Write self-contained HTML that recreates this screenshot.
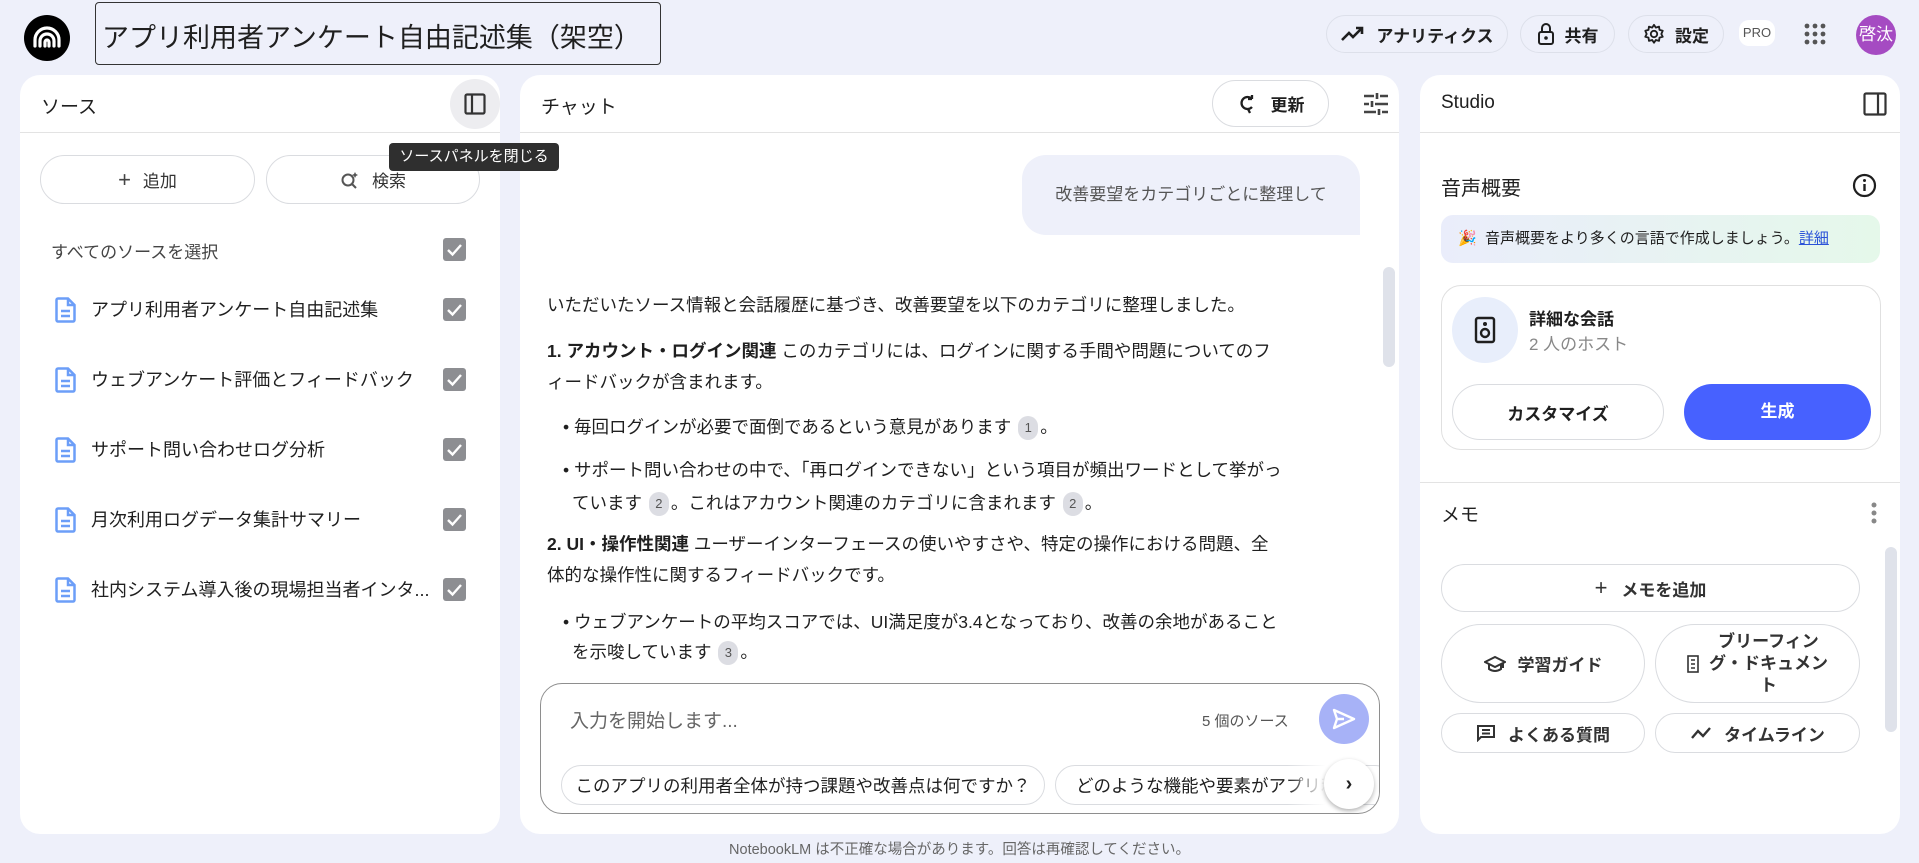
<!DOCTYPE html>
<html><head><meta charset="utf-8"><style>
*{box-sizing:border-box;margin:0;padding:0}
body{width:1919px;height:863px;overflow:hidden;background:#eef0fa;font-family:"Liberation Sans","Noto Sans CJK JP",sans-serif;color:#1f1f1f;position:relative}
.a{position:absolute}
.panel{position:absolute;background:#fff;border-radius:20px;top:75px;height:759px;overflow:hidden}
.ph{position:absolute;left:0;right:0;top:0;height:58px;border-bottom:1px solid #e3e3e3}
.pt{position:absolute;top:17px;font-size:19px;color:#1f1f1f}
.pill{position:absolute;border:1px solid #dadce0;border-radius:999px;display:flex;align-items:center;justify-content:center;font-size:17px;color:#333;background:#fff}
.hbtn{position:absolute;top:15px;height:38px;border:1px solid #dde0ea;border-radius:999px;display:flex;align-items:center;justify-content:center;gap:10px;font-size:17px;font-weight:bold;color:#1f1f1f;background:#eef0fa}
.cb{position:absolute;left:443px;width:23px;height:23px;background:#8d8e92;border-radius:3px}
.cb svg{position:absolute;left:3px;top:4px}
.src{position:absolute;left:91px;font-size:18px;color:#1f1f1f}
.doc{position:absolute;left:55px}
.t{position:absolute;left:547px;font-size:17.5px;color:#1f1f1f;white-space:nowrap}
.b{font-weight:bold}
.n{display:inline-block;width:20px;height:24px;border-radius:10px;background:#dcdde3;color:#555;font-size:13px;text-align:center;line-height:24px;vertical-align:middle;margin:0 2px}
.bl{position:absolute;left:563px;font-size:17.5px;white-space:nowrap}
</style></head><body>

<!-- header -->
<div class="a" style="left:24px;top:15px;width:46px;height:46px;border-radius:50%;background:#000">
<svg width="46" height="46" viewBox="0 0 46 46"><g fill="none" stroke="#fff" stroke-width="3.2" stroke-linecap="round"><path d="M11 31 V25 A12 12 0 0 1 35 25 V31"/><path d="M16 31 V26 A7 7 0 0 1 30 26 V31"/><path d="M21 31 V27 A2 2 0 0 1 25 27 V31"/></g></svg></div>
<div class="a" style="left:95px;top:2px;width:566px;height:63px;border:1px solid #333;border-radius:4px;font-size:27px;padding:13px 0 0 6px">アプリ利用者アンケート自由記述集（架空）</div>

<div class="hbtn" style="left:1326px;width:182px"><svg width="26" height="18" viewBox="0 0 26 18"><path d="M2 15 L9 8 L13 12 L22 3 M16 3 H22 V9" fill="none" stroke="#1f1f1f" stroke-width="2.6"/></svg>アナリティクス</div>
<div class="hbtn" style="left:1520px;width:95px"><svg width="18" height="24" viewBox="0 0 18 24"><rect x="2" y="10" width="14" height="12" rx="2" fill="none" stroke="#1f1f1f" stroke-width="2"/><path d="M5 10 V6 a4 4 0 0 1 8 0 V10" fill="none" stroke="#1f1f1f" stroke-width="2"/><circle cx="9" cy="16" r="1.8" fill="#1f1f1f"/></svg>共有</div>
<div class="hbtn" style="left:1628px;width:96px"><svg width="22" height="22" viewBox="0 0 24 24"><circle cx="12" cy="12" r="3.5" fill="none" stroke="#1f1f1f" stroke-width="2"/><path d="M12 2 l2 3 3.5-1 .5 3.5 3.5 1-1.5 3.5 1.5 3-3.5 1-.5 3.5-3.5-1-2 3-2-3-3.5 1-.5-3.5-3.5-1 1.5-3-1.5-3.5 3.5-1 .5-3.5 3.5 1z" fill="none" stroke="#1f1f1f" stroke-width="2" stroke-linejoin="round"/></svg>設定</div>
<div class="a" style="left:1739px;top:20px;width:36px;height:26px;background:#fff;border-radius:10px;font-size:13px;color:#555;text-align:center;line-height:26px">PRO</div>
<svg class="a" style="left:1804px;top:23px" width="22" height="22" viewBox="0 0 22 22" fill="#555"><circle cx="3" cy="3" r="2.4"/><circle cx="11" cy="3" r="2.4"/><circle cx="19" cy="3" r="2.4"/><circle cx="3" cy="11" r="2.4"/><circle cx="11" cy="11" r="2.4"/><circle cx="19" cy="11" r="2.4"/><circle cx="3" cy="19" r="2.4"/><circle cx="11" cy="19" r="2.4"/><circle cx="19" cy="19" r="2.4"/></svg>
<div class="a" style="left:1856px;top:15px;width:40px;height:40px;border-radius:50%;background:#a54bc2;color:#fff;font-size:17px;text-align:center;line-height:40px">啓汰</div>

<!-- left panel -->
<div class="panel" style="left:20px;width:480px">
 <div class="ph"><div class="pt" style="left:21px">ソース</div>
 <div class="a" style="left:430px;top:4px;width:50px;height:50px;border-radius:50%;background:#ededf0"><svg style="position:absolute;left:14px;top:14px" width="22" height="22" viewBox="0 0 22 22"><rect x="1.5" y="1.5" width="19" height="19" rx="1.5" fill="none" stroke="#333" stroke-width="2.2"/><path d="M8 1.5 V20.5" stroke="#333" stroke-width="2.2"/></svg></div></div>
</div>
<div class="pill" style="left:40px;top:155px;width:215px;height:49px;gap:12px"><span style="font-size:22px;color:#444">+</span>追加</div>
<div class="pill" style="left:266px;top:155px;width:214px;height:49px;gap:12px"><svg width="20" height="20" viewBox="0 0 20 20"><circle cx="8" cy="10" r="5.5" fill="none" stroke="#555" stroke-width="2"/><path d="M12 14 L16 18" stroke="#555" stroke-width="2"/><path d="M15 2 l1 2 2 1-2 1-1 2-1-2-2-1 2-1z" fill="#555"/></svg>検索</div>
<div class="a" style="left:51px;top:238px;font-size:17px;color:#444">すべてのソースを選択</div>
<div class="cb" style="top:238px"><svg width="17" height="15" viewBox="0 0 17 15"><path d="M2 8 L6.5 12.5 L15 3" fill="none" stroke="#fff" stroke-width="2.4"/></svg></div>

<svg class="doc" style="top:297px" width="21" height="26" viewBox="0 0 21 26"><path d="M3 1.5 H13 L19.5 8 V23 a1.5 1.5 0 0 1-1.5 1.5 H3 a1.5 1.5 0 0 1-1.5-1.5 V3 A1.5 1.5 0 0 1 3 1.5z M13 1.5 V8 H19.5 M6 14 H15 M6 19 H15" fill="none" stroke="#6c9ef8" stroke-width="2.5"/></svg>
<div class="src" style="top:296px">アプリ利用者アンケート自由記述集</div><div class="cb" style="top:298px"><svg width="17" height="15" viewBox="0 0 17 15"><path d="M2 8 L6.5 12.5 L15 3" fill="none" stroke="#fff" stroke-width="2.4"/></svg></div>
<svg class="doc" style="top:367px" width="21" height="26" viewBox="0 0 21 26"><path d="M3 1.5 H13 L19.5 8 V23 a1.5 1.5 0 0 1-1.5 1.5 H3 a1.5 1.5 0 0 1-1.5-1.5 V3 A1.5 1.5 0 0 1 3 1.5z M13 1.5 V8 H19.5 M6 14 H15 M6 19 H15" fill="none" stroke="#6c9ef8" stroke-width="2.5"/></svg>
<div class="src" style="top:366px">ウェブアンケート評価とフィードバック</div><div class="cb" style="top:368px"><svg width="17" height="15" viewBox="0 0 17 15"><path d="M2 8 L6.5 12.5 L15 3" fill="none" stroke="#fff" stroke-width="2.4"/></svg></div>
<svg class="doc" style="top:437px" width="21" height="26" viewBox="0 0 21 26"><path d="M3 1.5 H13 L19.5 8 V23 a1.5 1.5 0 0 1-1.5 1.5 H3 a1.5 1.5 0 0 1-1.5-1.5 V3 A1.5 1.5 0 0 1 3 1.5z M13 1.5 V8 H19.5 M6 14 H15 M6 19 H15" fill="none" stroke="#6c9ef8" stroke-width="2.5"/></svg>
<div class="src" style="top:436px">サポート問い合わせログ分析</div><div class="cb" style="top:438px"><svg width="17" height="15" viewBox="0 0 17 15"><path d="M2 8 L6.5 12.5 L15 3" fill="none" stroke="#fff" stroke-width="2.4"/></svg></div>
<svg class="doc" style="top:507px" width="21" height="26" viewBox="0 0 21 26"><path d="M3 1.5 H13 L19.5 8 V23 a1.5 1.5 0 0 1-1.5 1.5 H3 a1.5 1.5 0 0 1-1.5-1.5 V3 A1.5 1.5 0 0 1 3 1.5z M13 1.5 V8 H19.5 M6 14 H15 M6 19 H15" fill="none" stroke="#6c9ef8" stroke-width="2.5"/></svg>
<div class="src" style="top:506px">月次利用ログデータ集計サマリー</div><div class="cb" style="top:508px"><svg width="17" height="15" viewBox="0 0 17 15"><path d="M2 8 L6.5 12.5 L15 3" fill="none" stroke="#fff" stroke-width="2.4"/></svg></div>
<svg class="doc" style="top:577px" width="21" height="26" viewBox="0 0 21 26"><path d="M3 1.5 H13 L19.5 8 V23 a1.5 1.5 0 0 1-1.5 1.5 H3 a1.5 1.5 0 0 1-1.5-1.5 V3 A1.5 1.5 0 0 1 3 1.5z M13 1.5 V8 H19.5 M6 14 H15 M6 19 H15" fill="none" stroke="#6c9ef8" stroke-width="2.5"/></svg>
<div class="src" style="top:576px">社内システム導入後の現場担当者インタ...</div><div class="cb" style="top:578px"><svg width="17" height="15" viewBox="0 0 17 15"><path d="M2 8 L6.5 12.5 L15 3" fill="none" stroke="#fff" stroke-width="2.4"/></svg></div>

<!-- middle panel -->
<div class="panel" style="left:520px;width:879px">
 <div class="ph"><div class="pt" style="left:21px">チャット</div></div>
</div>
<div class="pill" style="left:1212px;top:80px;width:117px;height:47px;gap:12px;font-weight:bold;color:#1f1f1f"><svg width="22" height="20" viewBox="0 0 22 20"><path d="M15 5 A6 6 0 1 0 15 13 M15 5 V1 M15 5 H11" fill="none" stroke="#1f1f1f" stroke-width="2.3"/><path d="M11 15 L13 19" stroke="#1f1f1f" stroke-width="2.3"/></svg>更新</div>
<svg class="a" style="left:1364px;top:93px" width="24" height="22" viewBox="0 0 24 22" stroke="#444" stroke-width="2.6"><path d="M0 3 H10 M16 3 H24 M13 0 V6 M0 11 H5 M11 11 H24 M8 8 V14 M0 19 H12 M18 19 H24 M15 16 V22"/></svg>
<div class="a" style="left:1022px;top:155px;width:338px;height:80px;background:#eef0fa;border-radius:24px 24px 0 24px;font-size:17px;color:#555;text-align:center;line-height:80px">改善要望をカテゴリごとに整理して</div>
<div class="a" style="left:1383px;top:267px;width:12px;height:100px;background:#dfe2ea;border-radius:6px"></div>

<div class="t" style="top:292px">いただいたソース情報と会話履歴に基づき、改善要望を以下のカテゴリに整理しました。</div>
<div class="t" style="top:338px"><span class="b">1. アカウント・ログイン関連</span> このカテゴリには、ログインに関する手間や問題についてのフ</div>
<div class="t" style="top:369px">ィードバックが含まれます。</div>
<div class="bl" style="top:414px">• 毎回ログインが必要で面倒であるという意見があります <span class="n">1</span>。</div>
<div class="bl" style="top:457px">• サポート問い合わせの中で、「再ログインできない」という項目が頻出ワードとして挙がっ</div>
<div class="bl" style="top:490px;left:572px">ています <span class="n">2</span>。これはアカウント関連のカテゴリに含まれます <span class="n">2</span>。</div>
<div class="t" style="top:531px"><span class="b">2. UI・操作性関連</span> ユーザーインターフェースの使いやすさや、特定の操作における問題、全</div>
<div class="t" style="top:562px">体的な操作性に関するフィードバックです。</div>
<div class="bl" style="top:609px">• ウェブアンケートの平均スコアでは、UI満足度が3.4となっており、改善の余地があること</div>
<div class="bl" style="top:639px;left:572px">を示唆しています <span class="n">3</span>。</div>

<div class="a" style="left:540px;top:683px;width:840px;height:131px;border:1px solid #8e8e8e;border-radius:22px;background:#fff;overflow:hidden">
 <div class="a" style="left:29px;top:22px;font-size:19px;color:#666">入力を開始します...</div>
 <div class="a" style="left:661px;top:26px;font-size:15px;color:#555">5 個のソース</div>
 <div class="a" style="left:778px;top:10px;width:50px;height:50px;border-radius:50%;background:#a7b2f7"><svg style="position:absolute;left:13px;top:14px" width="24" height="22" viewBox="0 0 24 22"><path d="M2 2 L22 11 L2 20 L5 11z M5 11 H12" fill="none" stroke="#fff" stroke-width="2.4" stroke-linejoin="round"/></svg></div>
 <div class="pill" style="left:20px;top:81px;width:484px;height:40px;font-size:17.5px;color:#1f1f1f">このアプリの利用者全体が持つ課題や改善点は何ですか？</div>
 <div class="pill" style="left:514px;top:81px;width:340px;height:40px;font-size:17.5px;color:#1f1f1f;justify-content:flex-start;padding-left:20px;white-space:nowrap;overflow:hidden">どのような機能や要素がアプリ利用</div>
 <div class="a" style="left:746px;top:75px;width:64px;height:52px;background:linear-gradient(90deg,rgba(255,255,255,0),#fff 60%)"></div>
 <div class="a" style="left:783px;top:75px;width:50px;height:50px;border-radius:50%;background:#fff;box-shadow:0 2px 5px rgba(0,0,0,.3);text-align:center;line-height:50px;font-size:20px;font-weight:bold;color:#222">›</div>
</div>
<div class="a" style="left:0;width:1919px;top:838px;text-align:center;font-size:14.5px;color:#666">NotebookLM は不正確な場合があります。回答は再確認してください。</div>

<!-- right panel -->
<div class="panel" style="left:1420px;width:480px">
 <div class="ph"><div class="pt" style="left:21px">Studio</div>
 <svg style="position:absolute;left:443px;top:17px" width="24" height="24" viewBox="0 0 24 24"><rect x="1.5" y="1.5" width="21" height="21" rx="1.5" fill="none" stroke="#333" stroke-width="2.2"/><path d="M15 1.5 V22.5" stroke="#333" stroke-width="2.2"/></svg></div>
 <div class="a" style="left:0;right:0;top:407px;border-top:1px solid #e3e3e3"></div>
</div>
<div class="a" style="left:1441px;top:172px;font-size:20px">音声概要</div>
<svg class="a" style="left:1852px;top:173px" width="25" height="25" viewBox="0 0 25 25"><circle cx="12.5" cy="12.5" r="10.5" fill="none" stroke="#1f1f1f" stroke-width="2.2"/><path d="M12.5 11 V18" stroke="#1f1f1f" stroke-width="2.4"/><circle cx="12.5" cy="7.5" r="1.5" fill="#1f1f1f"/></svg>
<div class="a" style="left:1441px;top:215px;width:439px;height:48px;border-radius:12px;background:linear-gradient(90deg,#eaedfb,#e5f8ea);font-size:15px;color:#1f1f1f;line-height:48px;padding-left:17px"><span style="color:#c96">🎉</span>&nbsp; 音声概要をより多くの言語で作成しましょう。<span style="color:#2b52d8;text-decoration:underline">詳細</span></div>
<div class="a" style="left:1441px;top:285px;width:440px;height:165px;border:1px solid #e0e0e0;border-radius:20px"></div>
<div class="a" style="left:1452px;top:297px;width:66px;height:66px;border-radius:50%;background:#e8eefb"><svg style="position:absolute;left:22px;top:19px" width="22" height="28" viewBox="0 0 22 28"><rect x="2" y="2" width="18" height="24" rx="2" fill="none" stroke="#1f1f1f" stroke-width="2.4"/><circle cx="11" cy="8" r="2" fill="#1f1f1f"/><circle cx="11" cy="17" r="4" fill="none" stroke="#1f1f1f" stroke-width="2.4"/></svg></div>
<div class="a" style="left:1529px;top:305px;font-size:17px;font-weight:bold">詳細な会話</div>
<div class="a" style="left:1529px;top:330px;font-size:17px;color:#888">2 人のホスト</div>
<div class="pill" style="left:1452px;top:384px;width:212px;height:56px;font-weight:bold;color:#1f1f1f">カスタマイズ</div>
<div class="a" style="left:1684px;top:384px;width:187px;height:56px;border-radius:28px;background:#4761ff;color:#fff;font-weight:bold;font-size:17px;text-align:center;line-height:56px">生成</div>
<div class="a" style="left:1441px;top:500px;font-size:19px">メモ</div>
<svg class="a" style="left:1870px;top:501px" width="8" height="24" viewBox="0 0 8 24" fill="#888"><circle cx="4" cy="4" r="2.5"/><circle cx="4" cy="12" r="2.5"/><circle cx="4" cy="20" r="2.5"/></svg>
<div class="a" style="left:1885px;top:547px;width:12px;height:185px;background:#dfe2ea;border-radius:6px"></div>
<div class="pill" style="left:1441px;top:564px;width:419px;height:48px;gap:14px;font-size:17px;font-weight:bold;color:#333"><span style="font-size:22px;font-weight:normal">+</span>メモを追加</div>
<div class="pill" style="left:1441px;top:624px;width:204px;height:79px;gap:12px;font-size:17px;font-weight:bold;color:#333"><svg width="22" height="18" viewBox="0 0 22 18"><path d="M1 7 L11 2 L21 7 L11 12z M5 9 V14 Q11 18 17 14 V9 M19 8 V13" fill="none" stroke="#333" stroke-width="2"/></svg>学習ガイド</div>
<div class="pill" style="left:1655px;top:624px;width:205px;height:79px;gap:10px;font-size:17px;font-weight:bold;color:#333;line-height:22px"><svg width="12" height="18" viewBox="0 0 12 18"><rect x="1" y="1" width="10" height="16" fill="none" stroke="#333" stroke-width="1.6"/><path d="M4 5h4M4 9h4M4 13h4" stroke="#333" stroke-width="1.4"/></svg><span style="text-align:center">ブリーフィン<br>グ・ドキュメン<br>ト</span></div>
<div class="pill" style="left:1441px;top:713px;width:204px;height:40px;gap:12px;font-size:17px;font-weight:bold;color:#333"><svg width="20" height="18" viewBox="0 0 20 18"><path d="M2 2 H18 V13 H5 L2 16z M6 6 H14 M6 9.5 H14" fill="none" stroke="#333" stroke-width="2"/></svg>よくある質問</div>
<div class="pill" style="left:1655px;top:713px;width:205px;height:40px;gap:12px;font-size:17px;font-weight:bold;color:#333"><svg width="22" height="14" viewBox="0 0 22 14"><path d="M2 12 L8 5 L13 10 L20 2" fill="none" stroke="#333" stroke-width="2.4"/></svg>タイムライン</div>

<!-- tooltip on top -->
<div class="a" style="left:389px;top:143px;width:170px;height:28px;background:#2f2f2f;border-radius:4px;color:#fff;font-size:15px;text-align:center;line-height:28px;white-space:nowrap;z-index:10">ソースパネルを閉じる</div>
</body></html>
